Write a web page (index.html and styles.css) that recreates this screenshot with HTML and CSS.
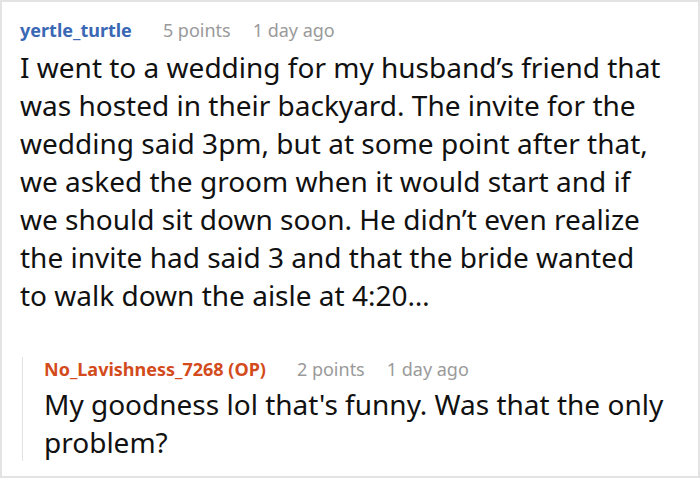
FILE: index.html
```html
<!DOCTYPE html>
<html>
<head>
<meta charset="utf-8">
<link rel="stylesheet" href="styles.css">
</head>
<body>
<div class="frame">
  <div class="comment">
    <div class="meta">
      <span class="user">yertle_turtle</span>
      <span class="info">5 points</span>
      <span class="info">1 day ago</span>
    </div>
    <p class="text">I went to a wedding for my husband’s friend that was hosted in their backyard. The invite for the wedding said 3pm, but at some point after that, we asked the groom when it would start and if we should sit down soon. He didn’t even realize the invite had said 3 and that the bride wanted to walk down the aisle at 4:20…</p>
    <div class="reply">
      <div class="meta">
        <span class="user op">No_Lavishness_7268 (OP)</span>
        <span class="info">2 points</span>
        <span class="info">1 day ago</span>
      </div>
      <p class="text">My goodness lol that's funny. Was that the only problem?</p>
    </div>
  </div>
</div>
</body>
</html>
```

FILE: styles.css
```css
html, body {
  margin: 0;
  padding: 0;
  background: #fff;
}
.frame {
  box-sizing: border-box;
  width: 700px;
  height: 478px;
  border: 2px solid #e3e3e3;
  padding: 16px 30px 0 18px;
  font-family: "Noto Sans", sans-serif;
  color: #111;
}
.meta {
  display: flex;
  gap: 22px;
  align-items: baseline;
  font-size: 18px;
  line-height: 24px;
  margin-bottom: 6px;
}
.user {
  font-weight: bold;
  color: #3a68b4;
  margin-right: 9px;
}
.user.op {
  color: #d34b1c;
}
.info {
  color: #9a9a9a;
}
.text {
  margin: 0;
  font-size: 28px;
  line-height: 38px;
}
.reply {
  margin-top: 54px;
  margin-left: 2px;
  border-left: 1px solid #e2e2e2;
  padding-left: 21px;
}
.reply .meta {
  margin-top: -11px;
  margin-bottom: 4px;
}
```
